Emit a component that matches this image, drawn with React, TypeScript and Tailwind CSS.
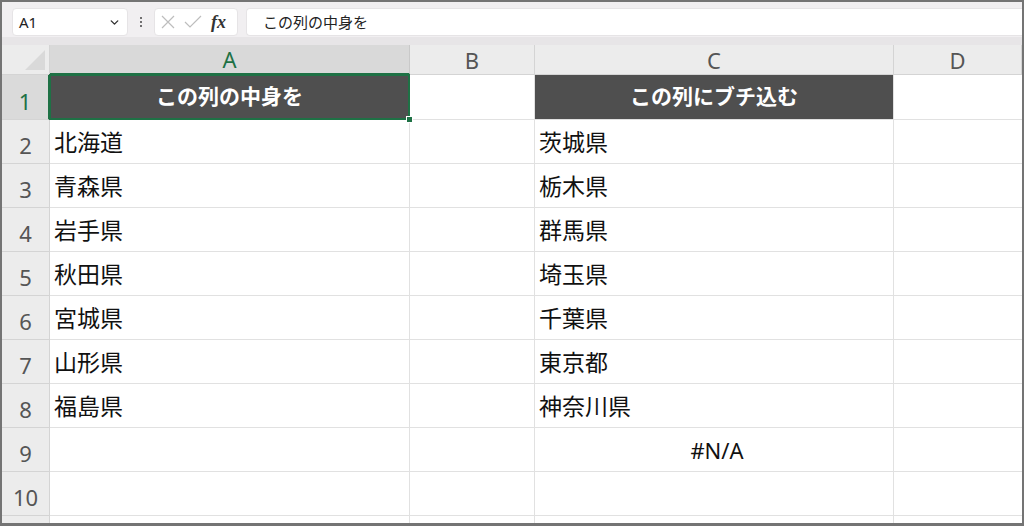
import * as React from "react"
import { ChevronDown } from "lucide-react"

const cols = ["A", "B", "C", "D"]

const leftData = ["北海道", "青森県", "岩手県", "秋田県", "宮城県", "山形県", "福島県", "", "", ""]
const rightData = ["茨城県", "栃木県", "群馬県", "埼玉県", "千葉県", "東京都", "神奈川県", "#N/A", "", ""]

const font = { fontFamily: '"Noto Sans", "Noto Sans CJK JP", sans-serif' }

function FormulaBar() {
  return (
    <div className="bg-[#f1eff1] shrink-0">
      <div className="flex items-center h-[35px] pt-[6px] pb-[1px] pl-[10px]">
        {/* Name box */}
        <div className="flex items-center justify-between w-[116px] h-[28px] bg-white rounded-[4px] border border-[#e6e4e6] pl-[6px] pr-[6px]">
          <span className="text-[15px] text-[#222]">A1</span>
          <ChevronDown size={13} strokeWidth={2.6} className="text-[#333]" />
        </div>

        {/* Dots */}
        <div className="flex flex-col items-center gap-[2px] w-[26px]">
          <span className="w-[2px] h-[2px] bg-[#444] rounded-full"></span>
          <span className="w-[2px] h-[2px] bg-[#444] rounded-full"></span>
          <span className="w-[2px] h-[2px] bg-[#444] rounded-full"></span>
        </div>

        {/* fx box */}
        <div className="flex items-center w-[84px] h-[28px] bg-white rounded-[4px] border border-[#e6e4e6] pl-[6px] gap-[9px]">
          <svg width="14" height="14" viewBox="0 0 14 14">
            <path d="M1 1 L13 13 M13 1 L1 13" stroke="#bdbdbd" strokeWidth="1.2" fill="none" />
          </svg>
          <svg width="18" height="14" viewBox="0 0 18 14">
            <path d="M1 7 L6 12 L17 1" stroke="#bdbdbd" strokeWidth="1.2" fill="none" />
          </svg>
          <span
            className="italic font-bold text-[18px] text-[#333] leading-none"
            style={{ fontFamily: '"Liberation Serif", serif' }}
          >
            fx
          </span>
        </div>

        {/* Formula input */}
        <div className="flex-1 flex items-center h-[28px] bg-white rounded-l-[4px] border border-r-0 border-[#e6e4e6] ml-[8px] pl-[16px]">
          <span className="text-[15px] text-[#222]">この列の中身を</span>
        </div>
      </div>
      <div className="h-[8px] bg-[#e7e5e7]"></div>
    </div>
  )
}

function HeaderRow() {
  return (
    <div className="grid grid-cols-[48px_360px_125px_359px_1fr] h-[30px] shrink-0">
      {/* Select all corner */}
      <div className="relative bg-[#ececec] border-r border-b border-[#d4d4d4]">
        <div className="absolute right-[4px] bottom-[4px] w-0 h-0 border-l-[20px] border-l-transparent border-b-[20px] border-b-[#d9d9d9]"></div>
      </div>
      {cols.map((c) => (
        <div
          key={c}
          className={
            c === "A"
              ? "flex items-center justify-center bg-[#d9d9d9] border-r border-[#c9c9c9] border-b-2 border-b-[#1e7145] text-[#1e7145] text-[22px]"
              : "flex items-center justify-center bg-[#ececec] border-r border-b border-[#d4d4d4] text-[#555] text-[22px]"
          }
        >
          <span className="leading-none">{c}</span>
        </div>
      ))}
    </div>
  )
}

function RowNum({ n }: { n: number }) {
  return (
    <div
      className={
        n === 1
          ? "flex items-end justify-center pb-[7px] bg-[#dadada] border-r-2 border-r-[#1e7145] border-b border-[#d4d4d4] text-[#1e7145] text-[22px]"
          : "flex items-end justify-center pb-[7px] bg-[#ececec] border-r border-b border-[#d4d4d4] text-[#555] text-[22px]"
      }
    >
      <span className="leading-none">{n}</span>
    </div>
  )
}

export default function App() {
  return (
    <div className="w-[1024px] h-[526px] overflow-hidden bg-white" style={font}>
      <div className="h-full border-2 border-[#747474] border-b-[3px] overflow-hidden flex flex-col">
        <FormulaBar />
        <HeaderRow />

        {/* Row 1 - headers */}
        <div className="grid grid-cols-[48px_360px_125px_359px_1fr] h-[45px] shrink-0">
          <RowNum n={1} />
          <div className="relative border-r border-b border-[#e1e1e1]">
            <div className="flex items-center justify-center h-full bg-[#4f4f4f] text-white font-bold text-[21px]">
              この列の中身を
            </div>
            <div className="absolute -left-px -top-px -right-px -bottom-px border-2 border-[#1e7145]"></div>
            <div className="absolute -right-[4px] -bottom-[4px] w-[7px] h-[7px] bg-[#1e7145] border border-white"></div>
          </div>
          <div className="border-r border-b border-[#e1e1e1]"></div>
          <div className="border-r border-b border-[#e1e1e1]">
            <div className="flex items-center justify-center h-full bg-[#4f4f4f] text-white font-bold text-[21px]">
              この列にブチ込む
            </div>
          </div>
          <div className="border-b border-[#e1e1e1]"></div>
        </div>

        {/* Data rows */}
        {leftData.map((left, i) => {
          const right = rightData[i]
          return (
            <div key={i} className="grid grid-cols-[48px_360px_125px_359px_1fr] h-[44px] shrink-0">
              <RowNum n={i + 2} />
              <div className="flex items-center pl-[4px] pt-[2px] border-r border-b border-[#e1e1e1] text-[23px] text-[#111]">
                {left}
              </div>
              <div className="border-r border-b border-[#e1e1e1]"></div>
              <div
                className={
                  right === "#N/A"
                    ? "flex items-center justify-center pl-[6px] pt-[2px] border-r border-b border-[#e1e1e1] text-[22px] text-[#111]"
                    : "flex items-center pl-[4px] pt-[2px] border-r border-b border-[#e1e1e1] text-[23px] text-[#111]"
                }
              >
                {right}
              </div>
              <div className="border-b border-[#e1e1e1]"></div>
            </div>
          )
        })}

        {/* Partial row 11 */}
        <div className="grid grid-cols-[48px_360px_125px_359px_1fr] h-[44px] shrink-0">
          <div className="bg-[#ececec] border-r border-[#d4d4d4]"></div>
          <div className="border-r border-[#e1e1e1]"></div>
          <div className="border-r border-[#e1e1e1]"></div>
          <div className="border-r border-[#e1e1e1]"></div>
          <div></div>
        </div>
      </div>
    </div>
  )
}
